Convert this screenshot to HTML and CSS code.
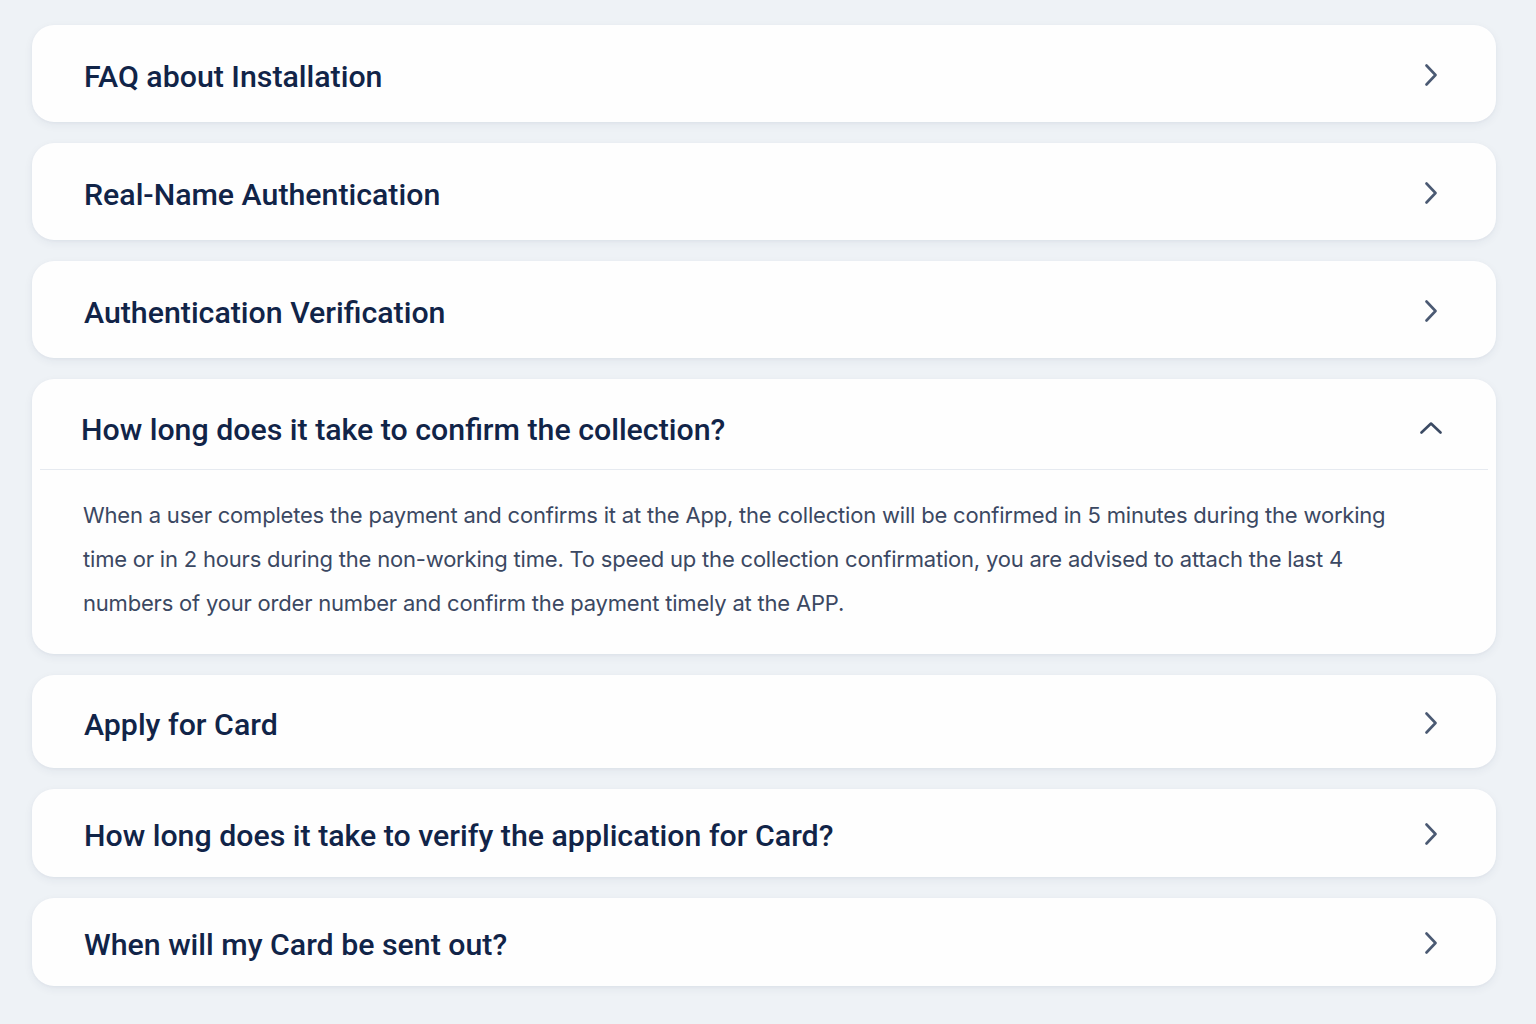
FILE: index.html
```html
<!DOCTYPE html>
<html lang="en">
<head>
<meta charset="utf-8">
<title>FAQ</title>
<link rel="stylesheet" href="styles.css">
</head>
<body>
<main class="faq">
  <section class="card">
    <div class="head"><h2 class="title">FAQ about Installation</h2>
      <svg class="chev" viewBox="0 0 12 22"><path d="M1.5 1.5 L10.5 11 L1.5 20.5"/></svg></div>
  </section>
  <section class="card">
    <div class="head"><h2 class="title">Real-Name Authentication</h2>
      <svg class="chev" viewBox="0 0 12 22"><path d="M1.5 1.5 L10.5 11 L1.5 20.5"/></svg></div>
  </section>
  <section class="card">
    <div class="head"><h2 class="title">Authentication Verification</h2>
      <svg class="chev" viewBox="0 0 12 22"><path d="M1.5 1.5 L10.5 11 L1.5 20.5"/></svg></div>
  </section>
  <section class="card open">
    <div class="head"><h2 class="title">How long does it take to confirm the collection?</h2>
      <svg class="chev-up" viewBox="0 0 22 12"><path d="M1.5 10.5 L11 1.5 L20.5 10.5"/></svg></div>
    <div class="divider"></div>
    <p class="answer">When a user completes the payment and confirms it at the App, the collection will be confirmed in 5 minutes during the working time or in 2 hours during the non-working time. To speed up the collection confirmation, you are advised to attach the last 4 numbers of your order number and confirm the payment timely at the APP.</p>
  </section>
  <section class="card mid">
    <div class="head"><h2 class="title">Apply for Card</h2>
      <svg class="chev" viewBox="0 0 12 22"><path d="M1.5 1.5 L10.5 11 L1.5 20.5"/></svg></div>
  </section>
  <section class="card small">
    <div class="head"><h2 class="title">How long does it take to verify the application for Card?</h2>
      <svg class="chev" viewBox="0 0 12 22"><path d="M1.5 1.5 L10.5 11 L1.5 20.5"/></svg></div>
  </section>
  <section class="card small">
    <div class="head"><h2 class="title">When will my Card be sent out?</h2>
      <svg class="chev" viewBox="0 0 12 22"><path d="M1.5 1.5 L10.5 11 L1.5 20.5"/></svg></div>
  </section>
</main>
</body>
</html>
```
FILE: styles.css
```css
html, body {
  margin: 0;
  padding: 0;
}
body {
  background: #eef2f6;
  font-family: Roboto, Inter, "Noto Sans", "Liberation Sans", sans-serif;
  min-height: 1024px;
}
.faq {
  display: flex;
  flex-direction: column;
  gap: 21px;
  padding: 25px 40px 0 32px;
}
.card {
  background: #fefefe;
  border-radius: 22px;
  box-shadow: 0 3px 10px rgba(30, 50, 90, 0.06), 0 1px 3px rgba(30, 50, 90, 0.04);
}
.head {
  display: flex;
  align-items: center;
  justify-content: space-between;
  box-sizing: border-box;
  height: 97px;
  padding: 5px 59px 0 52px;
}
.mid .head { height: 93px; }
.small .head { height: 88px; }
.title {
  margin: 0;
  font-size: 30.3px;
  font-weight: 500;
  color: #112448;
}
.chev {
  width: 12px;
  height: 22px;
  margin-top: -3px;
  fill: none;
  stroke: #4b5a73;
  stroke-width: 2.6;
  stroke-linecap: round;
  stroke-linejoin: round;
}
.chev-up {
  width: 22px;
  height: 12px;
  margin-top: -3px;
  fill: none;
  stroke: #3b4a63;
  stroke-width: 2.6;
  stroke-linecap: round;
  stroke-linejoin: round;
  margin-right: -5px;
}
.open .head {
  height: 90px;
  padding-top: 10px;
  padding-left: 49px;
}
.divider {
  height: 1px;
  background: #e6eaf0;
  margin: 0 8px;
}
.answer {
  margin: 0;
  padding: 23px 90px 29px 51px;
  font-family: Inter, Roboto, "Noto Sans", sans-serif;
  font-size: 22px;
  letter-spacing: -0.2px;
  line-height: 44px;
  color: #3b4862;
}
```
